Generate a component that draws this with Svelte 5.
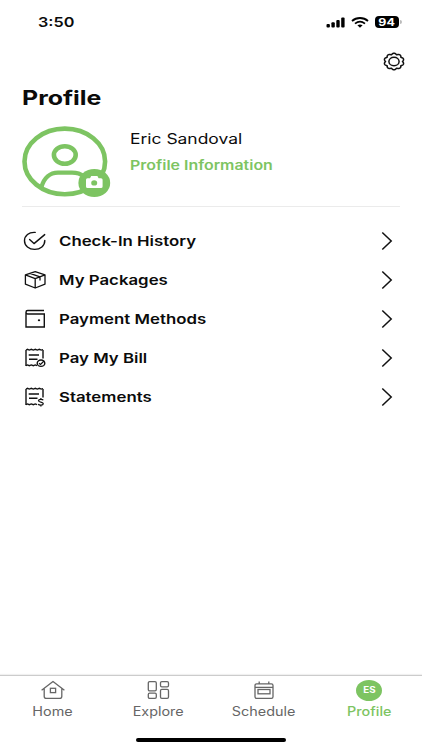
<!--
  Member profile screen: status bar, account summary, menu and tab bar.
  Labels use a widened Inter, see .wide.
-->
<script lang="ts">
  type MenuIcon = 'check' | 'package' | 'wallet' | 'bill' | 'statement'
  type TabIcon = 'home' | 'explore' | 'schedule' | 'profile'

  const menu: { label: string; icon: MenuIcon }[] = [
    { label: 'Check-In History', icon: 'check' },
    { label: 'My Packages', icon: 'package' },
    { label: 'Payment Methods', icon: 'wallet' },
    { label: 'Pay My Bill', icon: 'bill' },
    { label: 'Statements', icon: 'statement' },
  ]

  const tabs: { label: string; icon: TabIcon }[] = [
    { label: 'Home', icon: 'home' },
    { label: 'Explore', icon: 'explore' },
    { label: 'Schedule', icon: 'schedule' },
    { label: 'Profile', icon: 'profile' },
  ]

  let active = $state('Profile')

  // scalloped outline of the settings icon
  const gear = Array.from({ length: 121 }, (_, i) => {
    const a = (i / 120) * Math.PI * 2
    const r = 0.91 + 0.16 * Math.abs(Math.cos(a * 5))
    return `${(11 + 9.3 * r * Math.sin(a)).toFixed(2)},${(9.5 - 7.7 * r * Math.cos(a)).toFixed(2)}`
  }).join(' ')
</script>

<div class="screen">
  <header class="status">
    <span class="wide time">3:50</span>
    <div class="indicators">
      <svg width="19" height="11" viewBox="0 0 19 11">
        <rect x="0.5" y="7" width="3.4" height="3.5" rx="1" />
        <rect x="5.4" y="5.2" width="3.4" height="5.3" rx="1" />
        <rect x="10.3" y="2.9" width="3.4" height="7.6" rx="1" />
        <rect x="15.2" y="0.5" width="3.4" height="10" rx="1" />
      </svg>
      <svg class="wifi" width="18" height="11" viewBox="0 0 18 11">
        <path d="M1 4C5.5 0 12.5 0 17 4M4 6.600C7 4.200 11 4.200 14 6.600" fill="none" stroke="#000" stroke-width="1.8" />
        <path d="M6.400 8.300Q9 6.600 11.600 8.300L9 10.700Z" />
      </svg>
      <span class="battery"><span class="wide">94</span></span>
      <span class="nub"></span>
    </div>
  </header>

  <div class="toolbar">
    <svg width="22" height="19" viewBox="0 0 22 19" fill="none" stroke="#111" stroke-width="1.5">
      <polygon points={gear} stroke-linejoin="round" />
      <ellipse cx="11" cy="9.5" rx="5.1" ry="4.3" />
    </svg>
  </div>

  <h1><span class="wide">Profile</span></h1>

  <section class="summary">
    <svg class="avatar" width="90" height="72" viewBox="0 0 90 72" fill="none" stroke="#7dc462">
      <ellipse cx="42.8" cy="35.4" rx="40.3" ry="32.8" stroke-width="4.6" />
      <ellipse cx="42.8" cy="29" rx="10.9" ry="8.8" stroke-width="4.6" />
      <path d="M19.5 61C22 52 28 46.600 36 46.600H50C55 46.600 59 48 62 50.500" stroke-width="4.3" />
      <ellipse cx="72.3" cy="57" rx="15.9" ry="14" fill="#7dc462" stroke="none" />
      <path d="M65.500 52.200H68L69.200 50H75.400L76.600 52.200H79Q80.600 52.200 80.600 53.800V60.500Q80.600 62 79 62H65.600Q64 62 64 60.500V53.700Q64 52.200 65.500 52.200Z" fill="#fff" stroke="none" />
      <ellipse cx="72.2" cy="56.9" rx="3" ry="2.6" fill="#7dc462" stroke="none" />
    </svg>
    <div class="person">
      <span class="wide name">Eric Sandoval</span>
      <span class="wide info">Profile Information</span>
    </div>
  </section>

  <nav class="menu">
    {#each menu as item (item.label)}
      <div class="row">
        <svg class="icon" width="24" height="20" viewBox="0 0 24 20" fill="none" stroke="#111" stroke-width="1.4">
          {#if item.icon === 'check'}
            <path d="M13.200 1.400C6.800.9 2.500 4.800 2.500 9.700C2.500 14.800 7 18.400 12.700 18.400C18.400 18.400 22.800 14.800 22.800 9.500" stroke-linecap="round" />
            <path d="M7.600 8.500L12 12.600L22.700 3.600" stroke-linecap="round" stroke-linejoin="round" />
          {:else if item.icon === 'package'}
            <path d="M13.200 1.700L23 4.800V14.200L13.200 18L3.400 14.200V4.800ZM3.400 4.800L13.200 8.600L23 4.800M13.200 8.600V18M8 3.300L18 6.900V10.500" stroke-linejoin="round" stroke-width="1.3" />
          {:else if item.icon === 'wallet'}
            <path d="M22 1.500H5.700Q4 1.500 4 3.200V18H22.300V5H5.700Q4 5 4 3.200" />
            <ellipse cx="17" cy="11.3" rx="1.2" ry="1" fill="#111" stroke="none" />
          {:else}
            <path d="M4 2V18M21 2V10.500" />
            <path d="M4 2L5.500 1.300L7.300 2L9.300 1.300L11.300 2L13.300 1.300L15.300 2L17.300 1.300L19.300 2L21 1.500M4 17.700L5.500 17L7.300 17.700L9.300 17L11.300 17.700L13.300 17L15 17.700" stroke-width="1.3" />
            <path d="M6.700 7H17M7 11.200H15.500" />
            {#if item.icon === 'bill'}
              <ellipse cx="19" cy="15.2" rx="3.8" ry="3.2" />
              <path d="M17 15.200L18.500 16.400L22.300 12.800" stroke-width="1.2" />
            {:else}
              <path d="M21.200 13.200C20.600 12 16.700 12 16.500 13.600C16.400 15.400 21.400 14.800 21.300 16.800C21.100 18.600 16.900 18.500 16.200 17M18.900 11V12.500M18.900 18V19.600" stroke-width="1.3" />
            {/if}
          {/if}
        </svg>
        <span class="wide label">{item.label}</span>
        <svg class="chevron" width="12" height="20" viewBox="0 0 12 20" fill="none" stroke="#111" stroke-width="1.5">
          <path d="M1.300 1.500L10.200 10L1.300 18.500" />
        </svg>
      </div>
    {/each}
  </nav>

  <footer>
    <div class="tabs">
      {#each tabs as tab (tab.label)}
        <button class="tab" class:active={active === tab.label} onclick={() => (active = tab.label)}>
          <span class="glyph">
            {#if tab.icon === 'profile'}
              <span class="initials"><span class="wide">ES</span></span>
            {:else}
              <svg width="24" height="20" viewBox="0 0 24 20" fill="none" stroke="currentColor" stroke-width="1.3">
                {#if tab.icon === 'home'}
                  <path d="M.6 10.300L12 1.500L23.400 10.300M3.200 8.500V16.500Q3.200 18.400 5.500 18.400H18.500Q20.800 18.400 20.800 16.500V8.500" stroke-linejoin="round" />
                  <rect x="9.4" y="8.3" width="5.2" height="4.3" />
                {:else if tab.icon === 'explore'}
                  <rect x="2.300" y="1.6" width="8" height="9.2" rx="1.3" />
                  <rect x="14.5" y="1.6" width="8" height="5.2" rx="1.3" />
                  <rect x="2.300" y="13.1" width="8" height="5.3" rx="1.3" />
                  <rect x="14.5" y="9.4" width="8" height="9" rx="1.3" />
                {:else}
                  <rect x="3" y="3.8" width="18" height="14.6" rx="1.6" />
                  <path d="M3 7.300H21M7.200 1.500V4M16.800 1.500V4" />
                  <rect x="6" y="9.5" width="12" height="4.3" />
                {/if}
              </svg>
            {/if}
          </span>
          <span class="wide">{tab.label}</span>
        </button>
      {/each}
    </div>
    <div class="home-bar"></div>
  </footer>
</div>

<style>
  :global(body) { background: #fff; }
  .screen { box-sizing: border-box; width: 422px; height: 750px; display: flex; flex-direction: column; overflow: hidden; background: #fff; color: #0b0b0b; font-family: Inter, 'Liberation Sans', sans-serif; }
  .wide { display: inline-block; transform: scaleX(1.245); transform-origin: left center; white-space: nowrap; }

  .status { height: 44px; display: flex; justify-content: space-between; padding: 0 20px 0 38px; align-items: center; box-sizing: border-box; }
  .time { font-size: 13.5px; font-weight: 600; transform: scaleX(1.2); }
  .indicators { display: flex; align-items: center; }
  .wifi { margin: 0 6px 0 6px; }
  .battery { width: 24px; height: 12px; border-radius: 4px; background: #000; color: #fff; font-size: 10px; font-weight: 700; line-height: 12px; text-align: center; }
  .battery .wide { transform-origin: center; }
  .nub { width: 2px; height: 4px; margin-left: 1px; border-radius: 0 2px 2px 0; background: #bbb; }

  .toolbar { height: 36px; display: flex; justify-content: flex-end; align-items: center; padding-right: 17.5px; }
  .toolbar svg { display: block; margin-bottom: 1px; }
  h1 { margin: 5px 0 0 22px; font-size: 20px; line-height: 26px; font-weight: 700; }

  .summary { display: flex; height: 81px; margin: 15px 22px 0 22px; border-bottom: 1px solid #ebebeb; box-sizing: border-box; }
  .avatar { flex: none; }
  .person { display: flex; flex-direction: column; align-items: flex-start; margin-left: 18px; padding-top: 4px; }
  .name { font-size: 14px; line-height: 18px; }
  .info { margin-top: 8px; font-size: 13px; line-height: 18px; font-weight: 600; color: #7dc462; transform: scaleX(1.225); }

  .menu { flex: 1; padding: 14px 29px 0 22px; }
  .row { display: flex; align-items: center; height: 39px; }
  .label { margin-left: 13px; font-size: 13.5px; font-weight: 600; }
  .chevron { margin-left: auto; }

  footer { height: 75px; border-top: 1px solid #ccc; box-sizing: border-box; box-shadow: 0 -1px 1px #f0f0f0; }
  .tabs { display: flex; height: 62px; }
  .tab { flex: 1; display: flex; flex-direction: column; align-items: center; padding: 2px 0 0; border: 0; background: none; color: #666; font-family: inherit; font-size: 12.5px; line-height: 16px; }
  .tab .wide { margin-top: 2px; transform: scaleX(1.15); transform-origin: center; }
  .tab.active { color: #7dc462; font-weight: 500; }
  .glyph { display: flex; align-items: center; height: 24px; }
  .initials { width: 26px; height: 21px; border-radius: 50%; background: #7dc462; color: #fff; font-size: 8.5px; font-weight: 700; line-height: 21px; text-align: center; }
  .tab .initials .wide { margin-top: 0; }
  .home-bar { width: 150px; height: 4px; margin: 0 auto; border-radius: 2px; background: #000; }
</style>
